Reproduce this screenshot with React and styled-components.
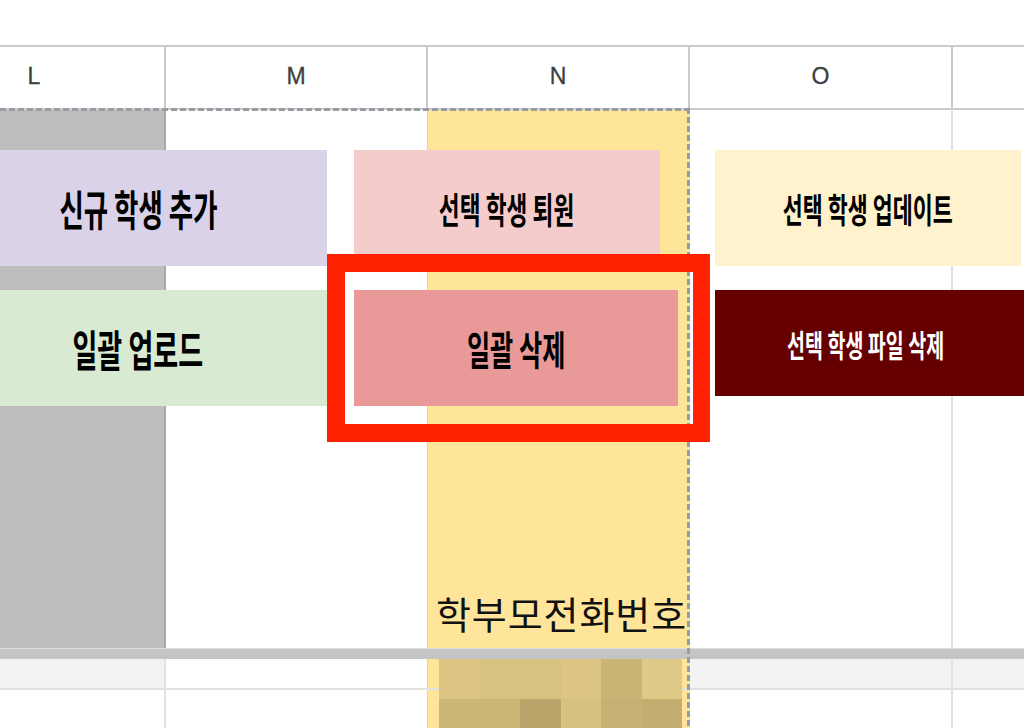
import React from 'react';
import styled, { createGlobalStyle } from 'styled-components';

const GlobalStyle = createGlobalStyle`
  html, body {
    margin: 0;
    padding: 0;
    background: #fff;
    overflow: hidden;
  }
  body {
    font-family: "Noto Sans CJK KR", "Noto Sans", sans-serif;
  }
`;

const Page = styled.div`
  position: relative;
  width: 1024px;
  height: 728px;
  overflow: hidden;
  background: #fff;
`;

const TopSpace = styled.div`
  height: 45px;
`;

const Sheet = styled.div`
  margin-left: -96px;
  width: 1250px;
`;

const COLS = '262px 262px 262px 263px 202px';

const HeaderRow = styled.div`
  display: grid;
  grid-template-columns: ${COLS};
  height: 65px;
  border-top: 2px solid #cbcbcb;
  border-bottom: 2px solid #cbcbcb;
  box-sizing: border-box;
`;

const HeaderCell = styled.div`
  display: flex;
  align-items: center;
  justify-content: center;
  border-right: 2px solid #cbcbcb;
  font-family: "Liberation Sans", Arial, sans-serif;
  font-size: 23px;
  color: #3d3f40;
  -webkit-text-stroke: 0.3px #3d3f40;
  padding-bottom: 2px;
`;

const Row = styled.div`
  display: grid;
  grid-template-columns: ${COLS};
  height: ${p => p.h}px;
  border-bottom: ${p => p.line || 'none'};
  box-sizing: content-box;
`;

const Cell = styled.div`
  background: ${p => p.bg || '#fff'};
  border-right: ${p => p.edge || '2px solid #e2e2e2'};
  box-sizing: border-box;
  display: flex;
  align-items: flex-end;
  overflow: hidden;
`;

const CellText = styled.span`
  font-family: "Noto Sans CJK KR", sans-serif;
  font-size: 38px;
  letter-spacing: 0.9px;
  line-height: 1;
  color: #111;
  white-space: nowrap;
  padding: 0 0 16px 8px;
`;

const FreezeLine = styled.div`
  height: 10px;
  background: #c4c4c4;
  border-top: 1px solid #dedede;
`;

const ButtonLayer = styled.div`
  position: absolute;
  left: -51px;
  top: 150px;
  display: grid;
  grid-template-columns: 378px 27px 324px 37px 320px;
  grid-template-rows: 116px 24px 116px;
`;

const Button = styled.div`
  grid-column: ${p => p.col};
  grid-row: ${p => p.row};
  width: ${p => p.w}px;
  height: ${p => p.h || 116}px;
  background: ${p => p.bg};
  color: ${p => p.fg || '#000'};
  display: flex;
  align-items: center;
  justify-content: center;
  padding-right: ${p => p.pr || 0}px;
  box-sizing: border-box;
`;

const Label = styled.span`
  display: inline-block;
  font-weight: 700;
  font-size: ${p => p.size}px;
  transform: scaleX(0.63);
  white-space: nowrap;
  line-height: 1;
`;

const Highlight = styled.div`
  position: absolute;
  left: 327px;
  top: 254px;
  width: 383px;
  height: 188px;
  box-sizing: border-box;
  border: 18px solid #ff2200;
  border-right-width: 17px;
`;

const MarqueeTop = styled.div`
  position: absolute;
  left: 0;
  top: 108px;
  width: 690px;
  height: 3px;
  background: repeating-linear-gradient(90deg, #979ca3 0 6px, transparent 6px 9px);
`;

const MarqueeRight = styled.div`
  position: absolute;
  left: 687px;
  top: 108px;
  width: 3px;
  height: 620px;
  background: repeating-linear-gradient(180deg, #979ca3 0 6px, transparent 6px 9px);
`;

const Mosaic = styled.div`
  position: absolute;
  left: 439px;
  top: 659px;
  display: grid;
  grid-template-columns: repeat(6, 40.5px);
  grid-template-rows: 40px 40px;
`;

const Tile = styled.div`
  background: ${p => p.c};
`;

const tiles = [
  '#dcc583', '#d8c27f', '#d8c27f', '#ddc684', '#cbb576', '#dfc986',
  '#cdb777', '#ccb676', '#baa56b', '#d7c180', '#c6b073', '#c3ad71',
];

const YELLOW = '#ffe599';

export default function App() {
  return (
    <Page>
      <GlobalStyle />
      <TopSpace />
      <Sheet>
        <HeaderRow>
          <HeaderCell>L</HeaderCell>
          <HeaderCell>M</HeaderCell>
          <HeaderCell>N</HeaderCell>
          <HeaderCell>O</HeaderCell>
          <HeaderCell />
        </HeaderRow>
        <Row h={538}>
          <Cell bg="#bdbdbd" edge="2px solid #a9a9a9" />
          <Cell edge="1px solid #ecd48a" />
          <Cell bg={YELLOW} edge="none">
            <CellText>학부모전화번호</CellText>
          </Cell>
          <Cell />
          <Cell />
        </Row>
        <FreezeLine />
        <Row h={29} line="2px solid #e1e1e1">
          <Cell bg="#f2f2f2" />
          <Cell edge="1px solid #ecd48a" />
          <Cell bg={YELLOW} edge="none" />
          <Cell bg="#f2f2f2" />
          <Cell bg="#f2f2f2" />
        </Row>
        <Row h={40}>
          <Cell />
          <Cell edge="1px solid #ecd48a" />
          <Cell bg={YELLOW} edge="none" />
          <Cell />
          <Cell />
        </Row>
      </Sheet>

      <Mosaic>
        {tiles.map((c, i) => (
          <Tile key={i} c={c} />
        ))}
      </Mosaic>

      <MarqueeTop />
      <MarqueeRight />

      <ButtonLayer>
        <Button col={1} row={1} w={378} bg="#d9d2e9">
          <Label size={42}>신규 학생 추가</Label>
        </Button>
        <Button col={3} row={1} w={306} bg="#f4cccc">
          <Label size={36}>선택 학생 퇴원</Label>
        </Button>
        <Button col={5} row={1} w={306} bg="#fff2cc">
          <Label size={34.5}>선택 학생 업데이트</Label>
        </Button>
        <Button col={1} row={3} w={378} bg="#d9ead3">
          <Label size={43}>일괄 업로드</Label>
        </Button>
        <Button col={3} row={3} w={324} bg="#ea9999">
          <Label size={40}>일괄 삭제</Label>
        </Button>
        <Button col={5} row={3} w={320} h={106} pr={18} bg="#660000" fg="#fff">
          <Label size={31}>선택 학생 파일 삭제</Label>
        </Button>
      </ButtonLayer>

      <Highlight />
    </Page>
  );
}
